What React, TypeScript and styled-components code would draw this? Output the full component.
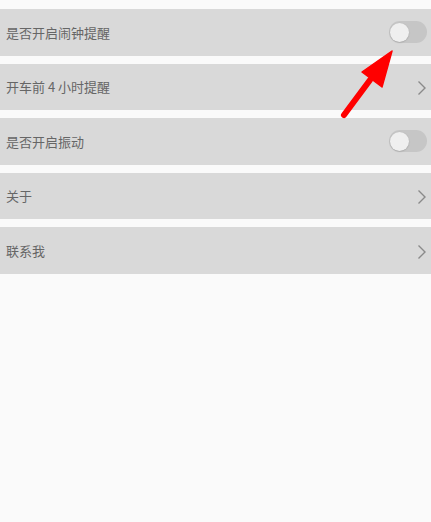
import React from "react";
import styled, { createGlobalStyle } from "styled-components";

const Global = createGlobalStyle`
  html, body {
    margin: 0;
    padding: 0;
    background: #fafafa;
  }
  body {
    font-family: "Noto Sans CJK SC", "Noto Sans", sans-serif;
  }
`;

const Page = styled.div`
  position: relative;
  width: 431px;
  height: 522px;
  background: #fafafa;
  padding-top: 9px;
  box-sizing: border-box;
  overflow: hidden;
`;

const List = styled.div`
  display: flex;
  flex-direction: column;
  gap: 8px;
`;

const Row = styled.div`
  height: 46.5px;
  background: #d9d9d9;
  display: flex;
  align-items: center;
  justify-content: space-between;
  padding: 0 4px 0 6px;
  box-sizing: border-box;
`;

const Label = styled.span`
  font-size: 13px;
  color: #666666;
  line-height: 1;
  letter-spacing: 0;
`;

const Track = styled.div`
  width: 38px;
  height: 22px;
  border-radius: 11px;
  background: #c6c6c6;
  position: relative;
  flex-shrink: 0;
`;

const Knob = styled.div`
  position: absolute;
  left: 1px;
  top: 1.5px;
  width: 19px;
  height: 19px;
  border-radius: 50%;
  background: #efefef;
  box-shadow: 0 0.5px 1.5px rgba(0, 0, 0, 0.2);
`;

const ChevronBox = styled.div`
  width: 12px;
  height: 18px;
  display: flex;
  align-items: center;
  justify-content: center;
  margin-top: 3px;
`;

const ArrowLayer = styled.svg`
  position: absolute;
  left: 0;
  top: 0;
  pointer-events: none;
`;

function Switch() {
  return (
    <Track>
      <Knob />
    </Track>
  );
}

function Chevron() {
  return (
    <ChevronBox>
      <svg width="12" height="18" viewBox="0 0 12 18">
        <path d="M3.5 2.5 L10 9 L3.5 15.5" fill="none" stroke="#8a8a8a" strokeWidth="1.4" />
      </svg>
    </ChevronBox>
  );
}

type Item = { label: string; kind: "switch" | "chevron" };

const items: Item[] = [
  { label: "是否开启闹钟提醒", kind: "switch" },
  { label: "开车前 4 小时提醒", kind: "chevron" },
  { label: "是否开启振动", kind: "switch" },
  { label: "关于", kind: "chevron" },
  { label: "联系我", kind: "chevron" },
];

export default function App() {
  return (
    <>
      <Global />
      <Page>
        <List>
          {items.map((it) => (
            <Row key={it.label}>
              <Label>{it.label}</Label>
              {it.kind === "switch" ? <Switch /> : <Chevron />}
            </Row>
          ))}
        </List>
        <ArrowLayer width="431" height="522" viewBox="0 0 431 522">
          <line x1="344" y1="115" x2="370" y2="80" stroke="#ff0000" strokeWidth="6" strokeLinecap="round" />
          <polygon points="392,51 362,72 382,87" fill="#ff0000" stroke="#ff0000" strokeWidth="1.5" strokeLinejoin="round" />
        </ArrowLayer>
      </Page>
    </>
  );
}
